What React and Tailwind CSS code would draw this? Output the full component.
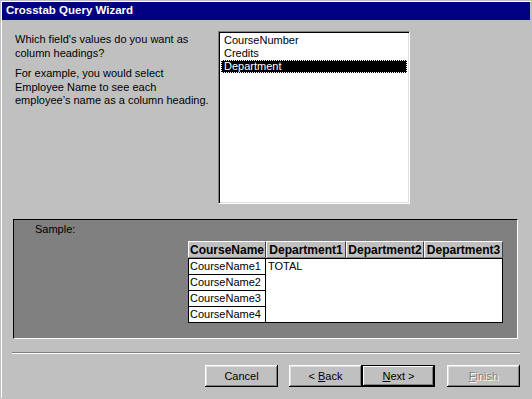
import React from "react";

const raised =
  "shadow-[inset_-1px_-1px_#000,inset_1px_1px_#fff,inset_-2px_-2px_#808080,inset_2px_2px_#dfdfdf]";

function Button({ children, isDefault, disabled }) {
  return (
    <div
      className={`w-[73px] h-[22px] flex items-center justify-center bg-[#c0c0c0] ${
        isDefault
          ? "border border-black shadow-[inset_-1px_-1px_#000,inset_1px_1px_#fff,inset_-2px_-2px_#808080]"
          : raised
      } ${disabled ? "text-[#808080] [text-shadow:1px_1px_#fff]" : "text-black"}`}
    >
      {children}
    </div>
  );
}

export default function App() {
  const fields = ["CourseNumber", "Credits", "Department"];
  const heads = [
    ["CourseName", "w-[78px]"],
    ["Department1", "w-[80px]"],
    ["Department2", "w-[78px]"],
    ["Department3", "w-[79px]"],
  ];

  return (
    <div className="w-[532px] h-[399px] bg-[#c0c0c0] p-[1px] font-['Liberation_Sans',Arial,sans-serif] text-[11px] text-black overflow-hidden">
      <div className="h-full border-l border-t border-white flex flex-col">
        {/* title bar */}
        <div className="h-[18px] mr-[1px] bg-[#000080] text-white font-bold text-[11.5px] flex items-center pl-[4px]">
          Crosstab Query Wizard
        </div>

        {/* question + list */}
        <div className="flex mt-[11px] pl-[13px]">
          <div className="w-[203px] pt-[2px] leading-[13.5px]">
            <p>
              Which field's values do you want as
              <br />
              column headings?
            </p>
            <p className="mt-[7px]">
              For example, you would select
              <br />
              Employee Name to see each
              <br />
              employee’s name as a column heading.
            </p>
          </div>
          <div className="w-[192px] h-[173px] bg-white border border-t-[#808080] border-l-[#808080] border-r-white border-b-white shadow-[inset_1px_1px_#000,inset_-1px_-1px_#dfdfdf] p-[2px]">
            {fields.map((f) =>
              f === "Department" ? (
                <div
                  key={f}
                  className="h-[13px] leading-[11px] bg-black text-white border border-dotted border-white pl-[2px]"
                >
                  {f}
                </div>
              ) : (
                <div key={f} className="h-[13px] leading-[13px] pl-[3px]">
                  {f}
                </div>
              )
            )}
          </div>
        </div>

        {/* sample panel */}
        <div className="mt-[15px] ml-[11px] w-[505px] h-[120px] bg-[#808080] border border-t-black border-l-black border-r-white border-b-white">
          <div className="pl-[21px] pt-[3px] leading-[13px] text-black">Sample:</div>
          <div className="ml-[174px] mt-[5px] w-[315px]">
            <div className="flex h-[17px]">
              {heads.map(([h, w]) => (
                <div
                  key={h}
                  className={`${w} h-[17px] bg-[#c0c0c0] font-bold text-[12px] flex items-center justify-center border-t border-l border-white border-r border-r-[#404040] border-b border-b-[#808080]`}
                >
                  {h}
                </div>
              ))}
            </div>
            <div className="flex bg-white border border-black h-[65px]">
              <div className="w-[77px] border-r border-black flex flex-col">
                {["CourseName1", "CourseName2", "CourseName3", "CourseName4"].map((c, i) => (
                  <div
                    key={c}
                    className={`h-[16px] leading-[15px] pl-[1px] ${i < 3 ? "border-b border-black" : ""}`}
                  >
                    {c}
                  </div>
                ))}
              </div>
              <div className="pl-[2px] leading-[15px]">TOTAL</div>
            </div>
          </div>
        </div>

        {/* separator */}
        <div className="mt-[13px] ml-[10px] w-[508px] border-t border-t-[#808080] border-b border-b-white"></div>

        {/* buttons */}
        <div className="flex mt-[11px] ml-[203px]">
          <Button>Cancel</Button>
          <div className="ml-[11px] flex">
            <Button>
              &lt; <span className="underline ml-[3px]">B</span>ack
            </Button>
            <Button isDefault>
              <span className="underline">N</span>ext &gt;
            </Button>
          </div>
          <div className="ml-[12px]">
            <Button disabled>
              <span className="underline">F</span>inish
            </Button>
          </div>
        </div>
      </div>
    </div>
  );
}
